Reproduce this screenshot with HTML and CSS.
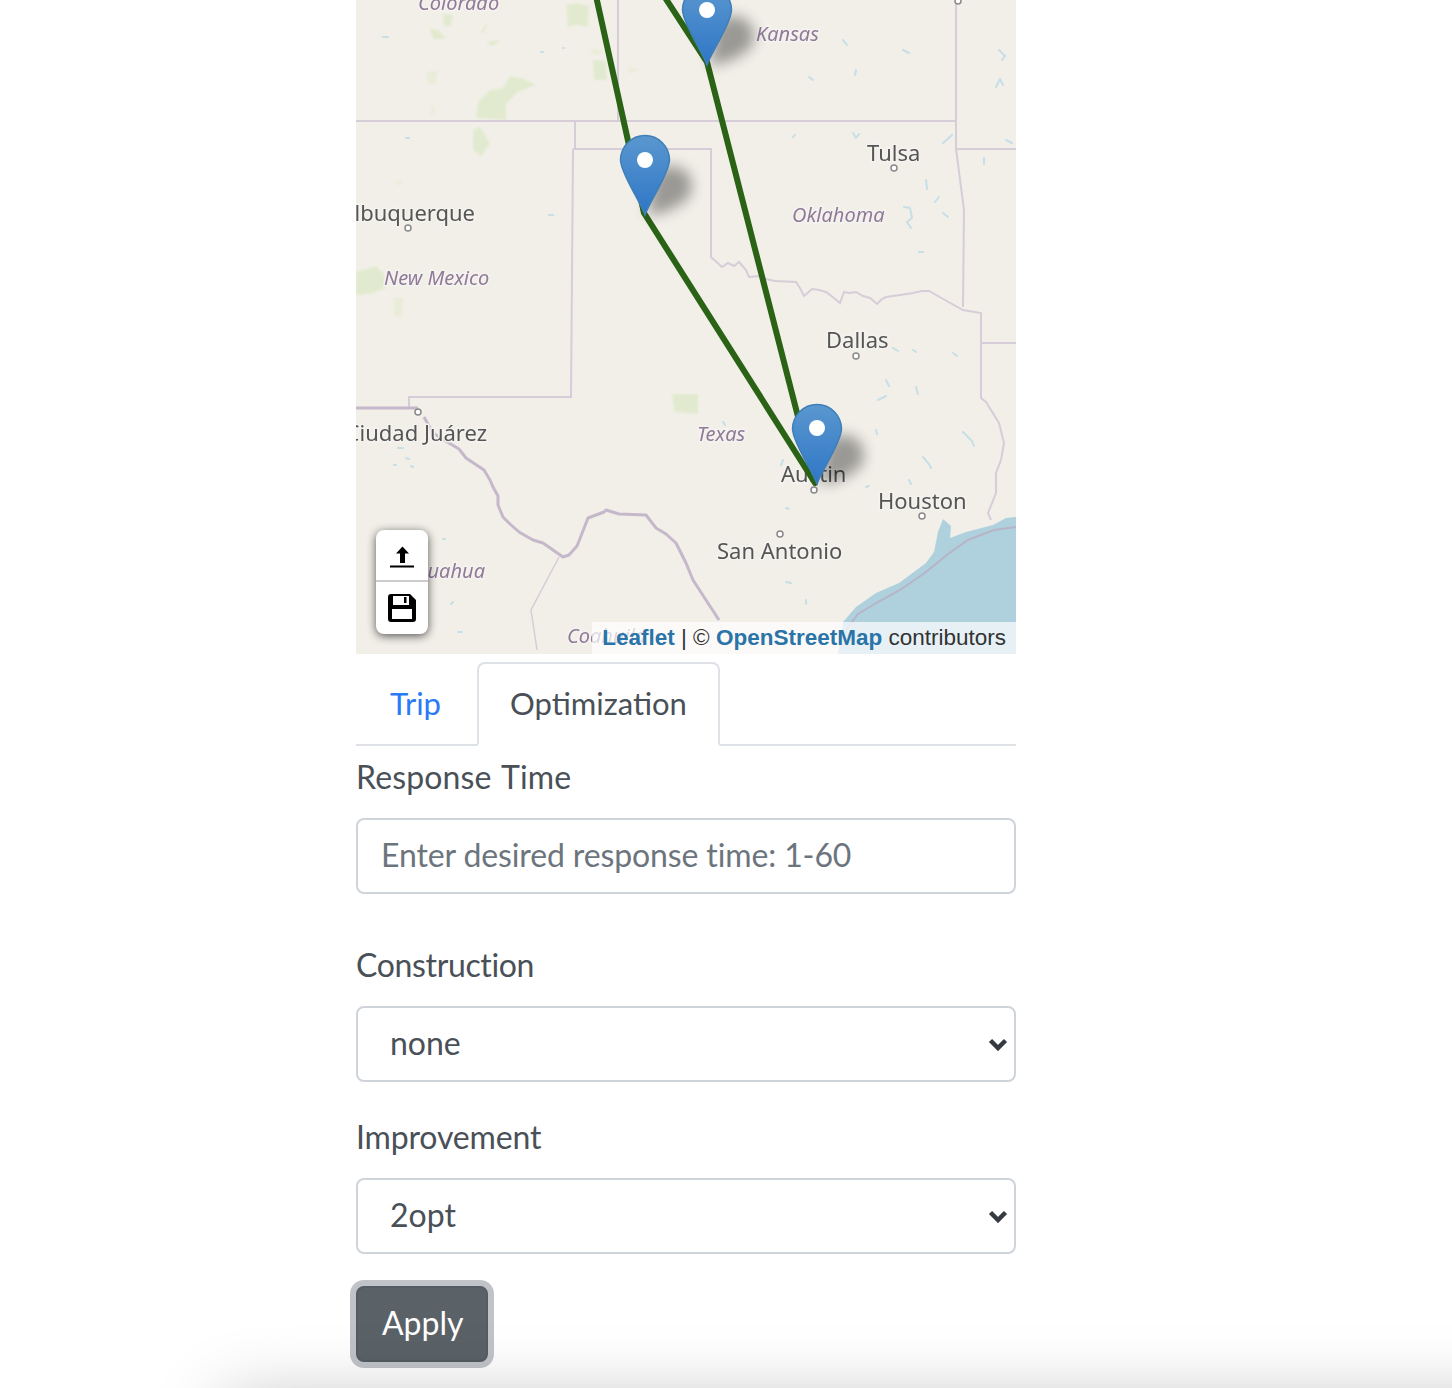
FILE: index.html
```html
<!DOCTYPE html>
<html>
	<head>
		<meta charset="UTF-8">
		<title>Trip</title>
		<link rel="stylesheet" href="styles.css">
	</head>
	<body>
		<div id="page">
			<div id="map">
				<svg class="map-svg" viewBox="356 0 660 654" width="660" height="654">
					<defs>
						<linearGradient id="pinFill" x1="0" y1="0" x2="0" y2="1">
							<stop offset="0" stop-color="#5a97cf"/>
							<stop offset="1" stop-color="#2e76c6"/>
						</linearGradient>
						<path id="pin" d="M0,0 C-5,-14 -24,-41 -24.500,-55 A24.500,24.500 0 1 1 24.500,-55 C24,-41 5,-14 0,0 Z"/>
						<path id="pinShadow" d="M2,0 L9,-38 A20,20 0 1 1 40,-14 Q20,0 2,0 Z"/>
					</defs>
					<g class="tiles">
						<rect x="356" y="0" width="660" height="654" class="land"/>
						<!-- green patches -->
						<path class="park" d="M566,5 L578,3 L589,6 L588,27 L576,25 L568,27 Z M593,60 L606,61 L607,80 L594,80 Z M476,118 L478,102 L490,90 L503,88 L510,76 L522,78 L536,85 L518,92 L506,104 L506,120 Z M473,130 L480,127 L490,143 L481,157 L473,150 Z M356,272 L376,266 L384,274 L386,288 L370,294 L356,295 Z M672,394 L698,394 L698,414 L674,412 Z M443,14 L453,15 L451,26 L444,26 Z M480,33 L489,20 L484,32 Z M429,28 L438,30 L446,38 L434,40 Z M486,42 L502,40 L492,46 Z"/>
						<path class="park-pale" d="M426,72 L438,70 L436,84 L428,84 Z M432,102 L436,114 L430,116 Z M394,180 L404,182 L398,186 Z M393,298 L404,298 L402,318 L394,316 Z M590,48 L606,52 L594,56 Z M628,66 L640,70 L630,74 Z"/>
						<!-- lakes -->
						<path class="lake" d="M843,40 l4,5 M903,50 l6,3 M856,70 l-1,5 M809,77 l4,3 M996,87 l4,-8 l3,6 M999,50 l6,6 l-3,4 M853,133 l3,5 l3,-4 M793,137 l2,-2 M943,143 l9,-8 M926,180 l1,9 M939,197 l-4,5 M904,207 l6,1 l2,10 l-5,4 l4,6 M943,213 l5,4 M919,252 l4,0 M1006,140 l6,3 M984,158 l0,6 M893,348 l5,3 M913,350 l3,2 M953,353 l4,3 M886,380 l3,6 M916,387 l2,7 M878,400 l8,-4 M876,430 l1,4 M963,432 l9,9 l2,5 M923,457 l6,7 l2,4 M909,480 l2,4 M783,460 l-2,5 M786,508 l3,1 M866,487 l3,-1 M723,422 l2,3 M786,582 l5,1 M806,600 l0,4 M398,448 l5,0 M406,458 l3,1 M394,465 l2,0 M411,466 l2,1 M458,632 l4,0 M453,602 l-2,2 M443,539 l2,0 M383,37 l5,0 M541,52 l2,0 M563,48 l1,0 M406,138 l3,0 M549,215 l4,0"/>
						<!-- coast -->
						<path class="water" d="M1016,517 L1006,518 L993,525 L966,532 L950,538 L951,526 L943,519 L938,532 L934,552 L926,563 L899,583 L876,593 L856,607 L843,622 L838,654 L1016,654 Z"/>
						<path class="coastline" d="M1016,527 L994,530 L968,540 L948,554 L926,572 L900,590 L878,602 L858,614 L846,630"/>
						<!-- borders -->
						<path class="border" d="M356,121 H955 M618,0 V121 M575,121 V149 M573,149 H711 V257 L722,267 L728,263 L734,266 L739,262 L746,270 L749,277 L760,276 L766,279 L775,281 L796,282 L800,288 L804,296 L812,289 L819,290 L826,292 L834,298 L840,303 L844,292 L850,293 L856,292 L863,296 L870,298 L877,304 L882,299 L886,297 L900,295 L913,293 L922,291 L929,291 L945,300 L963,310 L981,313 V398 L986,402 L999,423 L1004,443 L1001,460 L996,473 L996,493 L988,513 L991,520 M956,0 V149 H1016 M956,149 L961,187 L964,210 L963,307 M981,343 H1016 M573,149 L571,397 H409 V408"/>
						<path class="border-thick" d="M356,408 H418 M424,417 L433,433 L449,443 L459,449 L466,458 L484,470 L490,480 L493,487 L498,496 L498,505 L503,517 L510,524 L519,532 L533,540 L543,543 L553,550 L563,557 L569,555 L577,546 L581,536 L588,518 L604,512 L606,510 L619,514 L646,515 L656,528 L666,534 L676,543 L686,563 L693,580 L706,600 L719,620"/>
						<path class="border-thin" d="M559,557 L531,610 L537,650"/>
						<!-- labels -->
						<text class="state" x="418" y="10">Colorado</text>
						<text class="state" x="756" y="41">Kansas</text>
						<text class="state" x="792" y="222">Oklahoma</text>
						<text class="state" x="384" y="285">New Mexico</text>
						<text class="state" x="697" y="441">Texas</text>
						<text class="state" x="485" y="578" text-anchor="end">Chihuahua</text>
						<text class="state" x="567" y="643">Coahuila</text>
						<text class="city" x="475" y="221" text-anchor="end">Albuquerque</text>
						<text class="city" x="867" y="161">Tulsa</text>
						<text class="city" x="826" y="348">Dallas</text>
						<text class="city" x="487" y="441" text-anchor="end">Ciudad Juárez</text>
						<text class="city" x="781" y="482">Austin</text>
						<text class="city" x="878" y="509">Houston</text>
						<text class="city" x="717" y="559">San Antonio</text>
						<circle class="dot" cx="408" cy="228" r="3"/>
						<circle class="dot" cx="894" cy="168" r="3"/>
						<circle class="dot" cx="856" cy="356" r="3"/>
						<circle class="dot" cx="814" cy="490" r="3"/>
						<circle class="dot" cx="922" cy="516" r="3"/>
						<circle class="dot" cx="780" cy="534" r="3"/>
						<circle class="dot" cx="418" cy="412" r="3"/>
						<circle class="dot" cx="958" cy="1" r="3"/>
					</g>
					<!-- route -->
					<polyline class="route" points="596,-4 644,213 815,483 707,62 664,-4"/>
					<!-- markers -->
					<use href="#pinShadow" class="pin-shadow" x="707" y="65"/>
					<use href="#pinShadow" class="pin-shadow" x="645" y="215"/>
					<use href="#pinShadow" class="pin-shadow" x="817" y="484"/>
					<use href="#pin" class="pin" x="707" y="65"/>
					<circle class="pin-dot" cx="707" cy="10" r="8"/>
					<use href="#pin" class="pin" x="645" y="215"/>
					<circle class="pin-dot" cx="645" cy="160" r="8"/>
					<use href="#pin" class="pin" x="817" y="484"/>
					<circle class="pin-dot" cx="817" cy="428" r="8"/>
				</svg>
				<div class="map-tools">
					<a class="tool">
						<svg width="28" height="28" viewBox="0 0 28 28"><path d="M14.500,5.500 L21,12.500 H17 V22 H12 V12.500 H8 Z M2,24.500 H26 V26.500 H2 Z"/></svg>
					</a>
					<a class="tool">
						<svg width="28" height="28" viewBox="0 0 28 28"><path fill-rule="evenodd" d="M3,0 H22 L28,6 V25 A3,3 0 0 1 25,28 H3 A3,3 0 0 1 0,25 V3 A3,3 0 0 1 3,0 Z M5,2 V11 H21 V2 Z M4,15 V25 H24 V15 Z M16,3 H18.500 V9 H16 Z"/></svg>
					</a>
				</div>
				<div class="attribution"><a>Leaflet</a> | © <a>OpenStreetMap</a> contributors</div>
			</div>
			<ul id="tabs">
				<li class="tab">Trip</li>
				<li class="tab active">Optimization</li>
			</ul>
			<form class="tab-pane">
				<div class="group group-wide">
					<label class="label-response">Response Time</label>
					<input class="field" type="text" placeholder="Enter desired response time: 1-60">
				</div>
				<div class="group">
					<label class="label-tight">Construction</label>
					<div class="select-wrap">
						<select class="field select">
							<option>none</option>
						</select>
						<svg class="chevron" width="20" height="13" viewBox="0 0 20 13"><path d="M2.500,2.500 L10,10 L17.500,2.500"/></svg>
					</div>
				</div>
				<div class="group">
					<label>Improvement</label>
					<div class="select-wrap">
						<select class="field select">
							<option>2opt</option>
						</select>
						<svg class="chevron" width="20" height="13" viewBox="0 0 20 13"><path d="M2.500,2.500 L10,10 L17.500,2.500"/></svg>
					</div>
				</div>
				<button class="btn" type="button">Apply</button>
			</form>
		</div>
		<div class="shade"></div>
	</body>
</html>
```

FILE: styles.css
```css
*{
	padding: 0;
	margin: 0;
	box-sizing: border-box;
}
html,body{
	height: 100%;
	overflow: hidden;
	background: #fff;
}
body{
	font-size: 32px;
	line-height: 48px;
	font-family: "Lato", "Liberation Sans", sans-serif;
	color: #495057;
}
ul,li{
	list-style: none;
}
#page {
	width: 660px;
	margin-left: 356px;
}
#map {
	position: relative;
	width: 660px;
	height: 654px;
	overflow: hidden;
}
.map-svg {
	display: block;
}
.tiles {
	filter: blur(0.6px);
}
.land {
	fill: #f2efe9;
}
.park {
	fill: #dfeacb;
	opacity: 0.85;
	filter: blur(1px);
}
.park-pale {
	fill: #e8ecd6;
	opacity: 0.8;
	filter: blur(1px);
}
.lake {
	fill: none;
	stroke: #c6dfe7;
	stroke-width: 2;
	stroke-linecap: round;
	stroke-linejoin: round;
}
.water {
	fill: #afd1de;
}
.coastline {
	fill: none;
	stroke: #b7b4c8;
	stroke-width: 2;
}
.border {
	fill: none;
	stroke: #d6cdd8;
	stroke-width: 2;
}
.border-thick {
	fill: none;
	stroke: #c6b8cb;
	stroke-width: 3;
	stroke-linejoin: round;
}
.border-thin {
	fill: none;
	stroke: #d6cdd8;
	stroke-width: 1.5;
}
.state {
	font-family: "Noto Sans", sans-serif;
	font-style: italic;
	font-size: 20px;
	fill: #8f7a98;
	stroke: #f5f3ef;
	stroke-width: 3px;
	paint-order: stroke;
}
.city {
	font-family: "Noto Sans", sans-serif;
	font-size: 22px;
	fill: #555;
	stroke: #f5f3ef;
	stroke-width: 3px;
	paint-order: stroke;
}
.dot {
	fill: #fff;
	stroke: #8a8a8a;
	stroke-width: 1.5;
}
.route {
	fill: none;
	stroke: #2a6315;
	stroke-width: 6;
	stroke-linejoin: round;
}
.pin {
	fill: url(#pinFill);
	stroke: #3f7fb8;
	stroke-width: 1.500;
}
.pin-dot {
	fill: #fff;
}
.pin-shadow {
	fill: #000;
	opacity: 0.36;
	filter: blur(7px);
}
.map-tools {
	position: absolute;
	left: 20px;
	top: 530px;
	width: 52px;
	height: 104px;
	background: #fff;
	border-radius: 8px;
	box-shadow: 0 2px 10px rgba(0,0,0,0.65);
	overflow: hidden;
}
.tool {
	display: flex;
	align-items: center;
	justify-content: center;
	height: 52px;
}
.tool:first-child {
	border-bottom: 2px solid #ccc;
}
.tool svg {
	fill: #000;
}
.attribution {
	position: absolute;
	right: 0;
	bottom: 0;
	height: 32px;
	padding: 0 10px;
	background: rgba(255,255,255,0.7);
	font-family: "Liberation Sans", sans-serif;
	font-size: 22.500px;
	line-height: 32px;
	color: #333;
}
.attribution a {
	color: #2a74a8;
	font-weight: bold;
}
#tabs {
	display: flex;
	margin-top: 8px;
	border-bottom: 2px solid #dee2e6;
}
.tab {
	width: 121px;
	padding: 15px 32px 17px;
	border: 2px solid transparent;
	border-radius: 8px 8px 0 0;
	margin-bottom: -2px;
	font-size: 31px;
	color: #2a7af6;
}
.tab.active {
	width: 243px;
	padding-left: 31px;
	color: #495057;
	background: #fff;
	border-color: #dee2e6 #dee2e6 #fff;
}
.tab-pane {
	padding-top: 7px;
}
.group {
	margin-bottom: 32px;
}
.group-wide {
	margin-bottom: 48px;
}
label {
	display: block;
	margin-bottom: 17px;
	letter-spacing: -0.150px;
}
.label-response {
	letter-spacing: 0.150px;
	word-spacing: 2px;
}
.label-tight {
	letter-spacing: -0.350px;
}
.group + .group {
	margin-top: -1px;
}
.field {
	display: block;
	width: 100%;
	height: 76px;
	padding: 10px 23px 14px;
	border: 2px solid #ced4da;
	border-radius: 8px;
	background: #fff;
	color: #495057;
	font: inherit;
	outline: none;
}
.field::placeholder {
	color: #6c757d;
	opacity: 1;
	letter-spacing: -0.120px;
}
.select {
	appearance: none;
	padding: 11px 24px 13px 32px;
}
.select-wrap {
	position: relative;
}
.chevron {
	position: absolute;
	right: 8px;
	top: 32px;
	pointer-events: none;
}
.chevron path {
	fill: none;
	stroke: #343a40;
	stroke-width: 4.500;
}
.btn {
	display: block;
	width: 132px;
	height: 76px;
	padding: 11px 24px 13px;
	border: 2px solid #545b62;
	border-radius: 8px;
	background: #5a6268;
	box-shadow: 0 0 0 6px rgba(130,138,145,0.5);
	color: #fff;
	font: inherit;
	text-align: left;
}
.shade {
	position: fixed;
	left: 225px;
	right: -200px;
	top: 1400px;
	height: 200px;
	box-shadow: 0 0 70px rgba(0,0,0,0.25);
	pointer-events: none;
}
```
